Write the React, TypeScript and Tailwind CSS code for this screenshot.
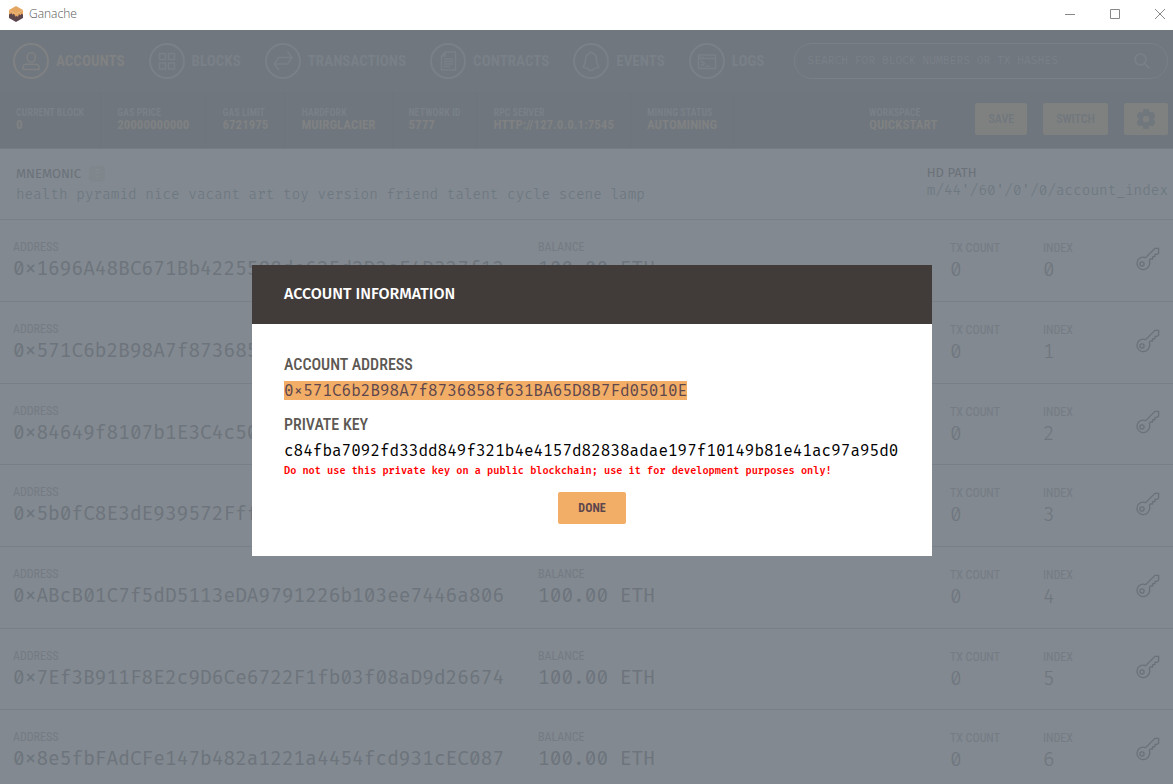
import type { ReactNode } from 'react';

const condensed = "font-['Roboto_Condensed','Liberation_Sans_Narrow','Roboto',sans-serif]";
const mono = "font-['Fira_Code','Liberation_Mono',monospace]";
const modalMono = "font-['Fira_Mono','Fira_Code','Liberation_Mono',monospace]";
const heading = "font-['Fira_Sans','Open_Sans',sans-serif]";

const navItems = [
  { label: 'ACCOUNTS', icon: <UserIcon />, active: true },
  { label: 'BLOCKS', icon: <BlocksIcon /> },
  { label: 'TRANSACTIONS', icon: <TransactionsIcon /> },
  { label: 'CONTRACTS', icon: <ContractsIcon /> },
  { label: 'EVENTS', icon: <BellIcon /> },
  { label: 'LOGS', icon: <LogsIcon /> },
];

const stats = [
  { label: 'CURRENT BLOCK', value: '0' },
  { label: 'GAS PRICE', value: '20000000000' },
  { label: 'GAS LIMIT', value: '6721975' },
  { label: 'HARDFORK', value: 'MUIRGLACIER' },
  { label: 'NETWORK ID', value: '5777' },
  { label: 'RPC SERVER', value: 'HTTP://127.0.0.1:7545' },
  { label: 'MINING STATUS', value: 'AUTOMINING' },
];

const accounts = [
  '0x1696A48BC671Bb4225588de625d2D2eF4D327f12',
  '0x571C6b2B98A7f8736858f631BA65D8B7Fd05010E',
  '0x84649f8107b1E3C4c50b2A6dE7951C3f0aD48e62',
  '0x5b0fC8E3dE939572Fff41a8D6B07c2E59Ac31d84',
  '0xABcB01C7f5dD5113eDA9791226b103ee7446a806',
  '0x7Ef3B911F8E2c9D6Ce6722F1fb03f08aD9d26674',
  '0x8e5fbFAdCFe147b482a1221a4454fcd931cEC087',
];

function Svg({ children }: { children: ReactNode }) {
  return (
    <svg
      width="22"
      height="22"
      viewBox="0 0 22 22"
      fill="none"
      stroke="currentColor"
      strokeWidth="1.6"
      strokeLinejoin="round"
      aria-hidden="true"
    >
      {children}
    </svg>
  );
}

function UserIcon() {
  return (
    <Svg>
      <rect x="7.2" y="2.8" width="8" height="9.200" rx="4" />
      <path d="M3 19.500v-2.200c0-2 1.400-3.100 3.200-3.100h9.600c1.800 0 3.200 1.100 3.200 3.100v2.200z" />
    </Svg>
  );
}

function BlocksIcon() {
  return (
    <Svg>
      <path d="M3.500 3.500h6v6h-6zM12.500 3.500h6v6h-6zM3.500 13h6v6h-6zM12.500 13h6v6h-6z" />
    </Svg>
  );
}

function TransactionsIcon() {
  return (
    <Svg>
      <path d="M6.500 7.500H20M15.500 1.500l4.500 6-4 6M16 14H2.300M7 20l-4.700-6 4.200-6.500" />
    </Svg>
  );
}

function ContractsIcon() {
  return (
    <Svg>
      <path d="M8 2h10.500v18h-14V6zM8 2v4H4.500M7 9h9M7 11.500h9M7 14h9M7 16.500h6" />
    </Svg>
  );
}

function BellIcon() {
  return (
    <Svg>
      <path d="M9.500 3.500a1.500 1.500 0 0 1 3 0c2.800.8 4 3 4 6 0 4 .5 5.500 2.500 7.500-1 1-3 1.300-5 1.500-.5 1.500-1.500 2-3 2s-2.500-.5-3-2c-2-.2-4-.5-5-1.500 2-2 2.500-3.500 2.500-7.500 0-3 1.200-5.200 4-6z" />
    </Svg>
  );
}

function LogsIcon() {
  return (
    <Svg>
      <path d="M2.500 5h17v13.500h-17zM2.500 8.500h17M5 11l3.500 2.500L5 16M9.500 16h4M4 6.800h1M6.500 6.800h1" />
    </Svg>
  );
}

function KeyIcon() {
  return (
    <svg width="24" height="24" viewBox="0 0 26 26" fill="none" stroke="currentColor" strokeWidth="1.4" strokeLinejoin="round" aria-hidden="true">
      <path d="M10.500 11.500 20.500 1.500h4v5l-1.500 1.500h-2.500v2.500h-2.500V13h-2.500l-1 1.500c.8 2.500.2 5.500-1.500 7.500-2.500 3-7 3.200-9.800.6-2.900-2.900-2.900-7.400 0-9.900 2-1.700 4.800-2.200 7.300-1.200z" />
      <circle cx="6.500" cy="18.500" r="2.300" />
    </svg>
  );
}

function GearIcon() {
  return (
    <svg width="18" height="20" viewBox="0 0 18 20" aria-hidden="true">
      <path
        fill="currentColor"
        fillRule="evenodd"
        d="M6.500 0h5l.7 2.600 1.500.9 2.300-.8 2 3.300.5 1.500-1.900 1.500v2l1.900 1.600-.6 1.600-2 3.100-2.500-.8-1.300.8-.6 2.700h-5l-.6-2.700-1.500-.8-2.400.8L0 14.200l-.5-1.600L1.400 11V9L-.5 7.500 0 6l2-3.300 2.400.8 1.500-.9zM9 6.800a3.200 3.200 0 1 0 0 6.400 3.200 3.200 0 0 0 0-6.400z"
      />
    </svg>
  );
}

function Logo() {
  return (
    <svg width="14" height="16" viewBox="0 0 14 16" aria-hidden="true">
      <path fill="#5e464d" d="M0 4l7 3.500L14 4v8l-7 4-7-4z" />
      <path fill="#e4a663" d="M7 0l7 4v4.500l-1.500-.8-1 1.500-1.500-1-1 2.500-1.500-.7-1 .8-1.500-3-1.500 1-1-1.500L0 8.500V4z" />
      <path fill="none" stroke="#f0bc80" strokeWidth=".7" d="M0 4.200l7 3.600 7-3.600" />
    </svg>
  );
}

function TitleBar() {
  return (
    <header className="flex h-[30px] shrink-0 items-center bg-white pr-[7px] pb-0.5 pl-[9px] text-[#888]">
      <Logo />
      <h1 className="ml-1.5 font-['Open_Sans',sans-serif] text-xs font-light text-[#555]">Ganache</h1>
      <div className="ml-auto flex gap-[33px]">
        <button aria-label="Minimize">
          <svg width="12" height="12" viewBox="0 0 12 12" stroke="currentColor"><path d="M1 6.500h10" /></svg>
        </button>
        <button aria-label="Maximize">
          <svg width="12" height="12" viewBox="0 0 12 12" fill="none" stroke="currentColor"><path d="M1.500 1.500h9v9h-9z" /></svg>
        </button>
        <button aria-label="Close">
          <svg width="12" height="12" viewBox="0 0 12 12" stroke="currentColor"><path d="M1 1l10 10M11 1L1 11" /></svg>
        </button>
      </div>
    </header>
  );
}

function NavBar() {
  return (
    <div className="flex h-[62px] shrink-0 items-center bg-[#70777f] pr-[5px] pl-[13px]">
      <nav className="flex gap-6">
        {navItems.map((item) => (
          <a
            key={item.label}
            href="#"
            className={`flex items-center gap-[7px] text-[15px] font-bold ${item.active ? 'text-[#7f8182]' : 'text-[#798087]'}`}
          >
            <span className="flex size-9 items-center justify-center rounded-full border-2 border-current">
              {item.icon}
            </span>
            {item.label}
          </a>
        ))}
      </nav>
      <div className="ml-[30px] flex h-9 flex-1 items-center rounded-full border border-[#798087] pr-4 pl-3 text-[#798087]">
        <input
          type="text"
          aria-label="Search"
          placeholder="SEARCH FOR BLOCK NUMBERS OR TX HASHES"
          className={`min-w-0 flex-1 bg-transparent text-[11px] outline-none placeholder:text-[#798087] ${mono}`}
        />
        <svg width="18" height="18" viewBox="0 0 18 18" fill="none" stroke="currentColor" strokeWidth="1.6" aria-hidden="true">
          <circle cx="7.500" cy="7.500" r="5.500" />
          <path d="M11.500 11.500l5 5" />
        </svg>
      </div>
    </div>
  );
}

function Stat({ label, value }: { label: string; value: string }) {
  return (
    <dl className="flex flex-col justify-center border-r border-[#6d747c] px-4 pb-0.5 font-bold whitespace-nowrap">
      <dt className="text-[10px] leading-3 text-[#798087]">{label}</dt>
      <dd className="text-[13px] leading-3 text-[#7f8182]">{value}</dd>
    </dl>
  );
}

function StatusBar() {
  const button = 'flex h-8 items-center justify-center rounded-xs bg-[#7f8180] px-[13px] text-xs font-medium text-[#70777d]';

  return (
    <div className="flex h-[57px] shrink-0 border-b border-[#757d84] bg-[#6f767e] pr-[5px]">
      {stats.map((stat) => (
        <Stat key={stat.label} {...stat} />
      ))}
      <div className="ml-auto flex items-center gap-4 pb-0.5">
        <dl className="mr-[22px] font-bold">
          <dt className="text-[10px] leading-3 text-[#798087]">WORKSPACE</dt>
          <dd className="text-[13px] leading-3 text-[#7f8182]">QUICKSTART</dd>
        </dl>
        <button className={button}>SAVE</button>
        <button className={button}>SWITCH</button>
        <button className={button} aria-label="Settings">
          <GearIcon />
        </button>
      </div>
    </div>
  );
}

function MnemonicBar() {
  return (
    <section className="flex h-[71px] shrink-0 justify-between border-b border-[#787f87] pr-[5px] pl-4 text-[#6b727a]">
      <div className="pt-4">
        <h2 className={`flex h-5 items-center gap-2 pb-0.5 text-[13px] ${heading}`}>
          MNEMONIC
          <span className="flex size-4 items-center justify-center rounded bg-[#7f868c] text-[10px] text-[#878e94]">?</span>
        </h2>
        <p className={`text-sm font-light text-[#6c7780] ${mono}`}>health pyramid nice vacant art toy version friend talent cycle scene lamp</p>
      </div>
      <div className="pt-3.5">
        <h2 className={`h-[18px] text-[13px] ${heading}`}>HD PATH</h2>
        <p className={`text-sm font-light text-[#6c7780] ${mono}`}>m/44'/60'/0'/0/account_index</p>
      </div>
    </section>
  );
}

function Cell({ label, value, muted }: { label: string; value: string; muted?: boolean }) {
  return (
    <td className={`border-b border-[#787f87] pl-[13px] align-top whitespace-nowrap ${muted ? 'pt-5' : 'pt-[19px]'}`}>
      <div className="text-xs text-[#747b83]">{label}</div>
      <div className={`text-[19px] leading-7 ${muted ? 'font-light text-[#6f767e]' : 'text-[#6d747c]'} ${mono}`}>{value}</div>
    </td>
  );
}

function AccountTable() {
  return (
    <table className="w-full table-fixed border-separate border-spacing-0">
      <colgroup>
        <col className="w-[525px]" />
        <col />
        <col className="w-[93px]" />
        <col className="w-[93px]" />
        <col className="w-[50px]" />
      </colgroup>
      <tbody>
        {accounts.map((address, i) => (
          <tr key={address} className="h-[82px] nth-[3n]:h-[81px]">
            <Cell label="ADDRESS" value={address} />
            <Cell label="BALANCE" value="100.00 ETH" />
            <Cell label="TX COUNT" value="0" muted />
            <Cell label="INDEX" value={String(i)} muted />
            <td className="border-b border-[#787f87] pb-1 pl-[13px] text-[#6a7179]">
              <button className="block" aria-label={`Show keys of account ${i}`}>
                <KeyIcon />
              </button>
            </td>
          </tr>
        ))}
      </tbody>
    </table>
  );
}

function AccountModal() {
  return (
    <div role="dialog" aria-labelledby="modal-title" className="w-[680px] bg-white">
      <header className="bg-[#413c39] px-8 pt-[17px] pb-[18px] text-white">
        <h2 id="modal-title" className={`text-base font-medium ${heading}`}>ACCOUNT INFORMATION</h2>
      </header>
      <div className="px-8 pt-[30px] pb-8">
        <h3 className="text-base leading-[22px] font-medium text-[#5d5853]">ACCOUNT ADDRESS</h3>
        <p className={`mt-[5px] leading-5 font-light text-[#5e464d] ${modalMono}`}>
          <mark className="bg-[#f2ae67] text-inherit">0×571C6b2B98A7f8736858f631BA65D8B7Fd05010E</mark>
        </p>
        <h3 className="mt-[13px] text-base leading-[22px] font-medium text-[#5d5853]">PRIVATE KEY</h3>
        <p className={`mt-[5px] leading-5 font-light text-black ${modalMono}`}>c84fba7092fd33dd849f321b4e4157d82838adae197f10149b81e41ac97a95d0</p>
        <p className={`text-[10px] leading-5 font-semibold text-[#f00] ${mono}`}>
          Do not use this private key on a public blockchain; use it for development purposes only!
        </p>
        <button className="mx-auto mt-[11px] block h-8 rounded-xs bg-[#f2ae67] px-5 text-xs font-bold text-[#5e464d]">DONE</button>
      </div>
    </div>
  );
}

export default function App() {
  return (
    <div className={`flex h-screen flex-col overflow-hidden ${condensed}`}>
      <TitleBar />
      <div className="relative flex min-h-0 flex-1 flex-col overflow-hidden bg-[#828990]">
        <NavBar />
        <StatusBar />
        <MnemonicBar />
        <AccountTable />
        <div className="absolute inset-0 flex items-center justify-center pt-[7px] pl-[11px]">
          <AccountModal />
        </div>
      </div>
    </div>
  );
}
